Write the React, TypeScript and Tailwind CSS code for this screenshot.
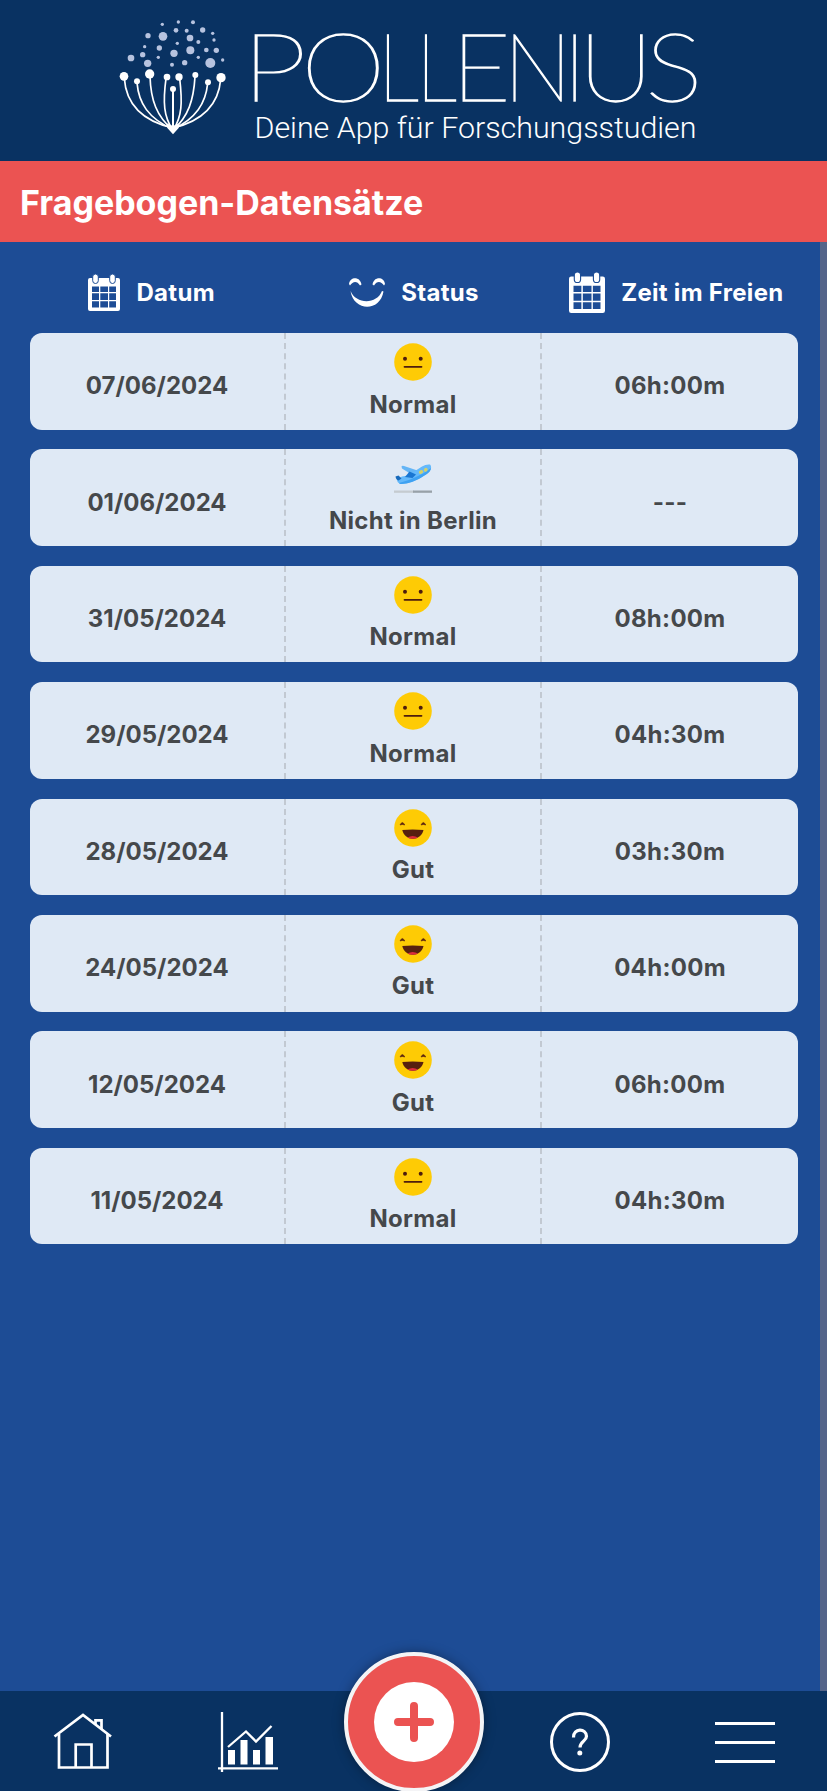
import type { ReactNode } from 'react';

type Status = 'normal' | 'gut' | 'away';

const entries: { date: string; status: Status; time: string }[] = [
  { date: '07/06/2024', status: 'normal', time: '06h:00m' },
  { date: '01/06/2024', status: 'away', time: '---' },
  { date: '31/05/2024', status: 'normal', time: '08h:00m' },
  { date: '29/05/2024', status: 'normal', time: '04h:30m' },
  { date: '28/05/2024', status: 'gut', time: '03h:30m' },
  { date: '24/05/2024', status: 'gut', time: '04h:00m' },
  { date: '12/05/2024', status: 'gut', time: '06h:00m' },
  { date: '11/05/2024', status: 'normal', time: '04h:30m' },
];

const labels: Record<Status, string> = {
  normal: 'Normal',
  gut: 'Gut',
  away: 'Nicht in Berlin',
};

// [cx, cy, r] of the loose pollen grains
const grains = [
  [187, 73, 5], [235, 66, 5], [279, 67, 6], [144, 107, 8], [189, 109, 13], [228, 91, 7],
  [260, 92, 6], [308, 90, 8], [270, 114, 10], [338, 100, 5], [342, 120, 5], [295, 126, 6],
  [232, 130, 5], [134, 140, 5], [178, 144, 8], [128, 164, 8], [93, 174, 10], [143, 190, 11],
  [175, 172, 5], [222, 160, 11], [271, 151, 12], [319, 150, 7], [349, 151, 8], [295, 172, 5],
  [254, 188, 8], [216, 194, 6], [331, 189, 15], [368, 180, 5],
];

const heads = [
  [72, 229, 13], [111, 244, 9], [149, 222, 14], [201, 231, 10], [237, 231, 11],
  [286, 225, 9], [324, 247, 9], [363, 233, 14], [219, 267, 9],
];

// letter, x, horizontal stretch
const wordmark: [string, number, number][] = [
  ['P', 242, 1.22],
  ['O', 301.2, 1.13],
  ['L', 378, 0.86],
  ['L', 416, 0.86],
  ['E', 451.6, 1.07],
  ['N', 503.5, 0.96],
  ['I', 563, 1],
  ['U', 578.6, 1.09],
  ['S', 645.2, 1.14],
];

function Logo() {
  return (
    <svg width="827" height="161" viewBox="0 0 827 161" className="block">
      <g transform="translate(100 0) scale(0.33333)">
        <g fill="#b7c3df">
          {grains.map(([cx, cy, r], i) => <circle key={i} cx={cx} cy={cy} r={r} />)}
        </g>
        <g fill="#fff">
          {heads.map(([cx, cy, r], i) => <circle key={i} cx={cx} cy={cy} r={r} />)}
          <path d="M200 370 L219 378 L238 370 L236 384 L219 403 L202 384 Z" />
        </g>
        <g fill="none" stroke="#fff" strokeWidth="5">
          <path d="M73 235 C78 310 125 362 219 384" />
          <path d="M111 248 C116 310 145 355 219 388" />
          <path d="M150 228 C152 300 170 350 219 390" />
          <path d="M198 235 C188 310 192 350 217 388" />
          <path d="M219 270 V392" strokeWidth="6" />
          <path d="M239 235 C248 310 245 350 221 388" />
          <path d="M285 230 C281 300 265 350 219 390" />
          <path d="M323 250 C317 310 288 355 219 388" />
          <path d="M362 238 C356 310 310 362 219 384" />
        </g>
      </g>
      <g fill="#fff" stroke="#fff" strokeWidth="1.3" fontSize="95" className="font-['Lato',sans-serif] font-thin">
        {wordmark.map(([letter, x, stretch], i) => (
          <text key={i} transform={`translate(${x} 100.5) scale(${stretch} 1)`}>{letter}</text>
        ))}
      </g>
      <text
        x="254.5"
        y="138"
        fill="#fff"
        fontSize="30"
        textLength="442"
        lengthAdjust="spacingAndGlyphs"
        className="font-['Roboto',sans-serif] font-light"
      >
        Deine App für Forschungsstudien
      </text>
    </svg>
  );
}

function CalendarIcon({ className }: { className: string }) {
  return (
    <svg viewBox="0 0 32 37" preserveAspectRatio="none" className={className}>
      <path
        fill="#fff"
        fillRule="evenodd"
        d="M2 4H30Q32 4 32 6V35Q32 37 30 37H2Q0 37 0 35V6Q0 4 2 4ZM4 12.5V18H11V12.5ZM12.3 12.5V18H20V12.5ZM21.2 12.5V18H28V12.5ZM4 19.3V26H11V19.3ZM12.3 19.3V26H20V19.3ZM21.2 19.3V26H28V19.3ZM4 27.3V33.5H11V27.3ZM12.3 27.3V33.5H20V27.3ZM21.2 27.3V33.5H28V27.3Z"
      />
      <rect x="4.7" y="0" width="5.6" height="9.5" rx="2.8" fill="#fff" stroke="#1c4c94" strokeWidth="1" />
      <rect x="21.7" y="0" width="5.6" height="9.5" rx="2.8" fill="#fff" stroke="#1c4c94" strokeWidth="1" />
    </svg>
  );
}

function SmileIcon() {
  return (
    <svg viewBox="0 0 36 29" className="h-[29px] w-[36px]">
      <path d="M0 6C1-1.500 11-2 12.500 6.500L11 7.500C8 2.500 4 3 1 7.500Z" fill="#fff" />
      <path d="M23.500 6.500C25-2 35-1.500 36 6L35 7.500C32 3 28 2.500 25 7.500Z" fill="#fff" />
      <path d="M1.500 13C7 26.500 28 26.500 33 13L34.500 13.500C31 34 5 34 1.500 13Z" fill="#fff" />
    </svg>
  );
}

function StatusIcon({ status }: { status: Status }) {
  if (status === 'away') {
    return (
      <svg viewBox="0 0 38 38" className="size-[38px]">
        <path d="M0 31.500H20V33.800H0Z" fill="#c5cbd0" />
        <path d="M19 31.500H38V33.800H19Z" fill="#98a1a8" />
        <path d="M8 9.500L7.500 7.500Q8 6.500 10 7L25 12L20 17Z" fill="#64b5f6" />
        <path d="M3 20L8 17.500L14 16.500L28 7.500Q32 5 36 5.500Q38.500 8 35.500 12.500Q29 18 20 22Q12 25.500 5.500 24.500Q3 23.500 3 20Z" fill="#64b9fb" />
        <path d="M5 24Q14 22 23 17.500Q31 14 37 9Q37 12 33 15Q26 20 18 23Q11 25.500 6 25Z" fill="#3fa2f2" />
        <path d="M11 18L15.500 12.500L22 15.500L18.500 19Z" fill="#1976d2" />
        <path d="M1.500 17.500L4.500 16.500L7.500 19.500L4.500 21.500Q2 21 1.500 17.500Z" fill="#1669bb" />
        <path d="M26.500 13.200L27.500 12.700M31.500 11L32 10.500" stroke="#d3d06c" strokeWidth="3.300" strokeLinecap="round" />
      </svg>
    );
  }
  return (
    <svg viewBox="0 0 38 38" className="size-[38px]">
      <circle cx="19" cy="19" r="18.800" fill="#fecb05" />
      {status === 'normal' ? (
        <>
          <circle cx="11" cy="15.700" r="2" fill="#4d1d0d" />
          <circle cx="26.700" cy="15.700" r="2" fill="#4d1d0d" />
          <path d="M10.500 23.800H27.500" stroke="#4d1d0d" strokeWidth="1.800" strokeLinecap="round" />
        </>
      ) : (
        <>
          <path d="M6 16Q8.300 11 10.800 16Q8.300 14.800 6 16ZM27 16Q29.300 11 31.800 16Q29.300 14.800 27 16Z" fill="#5a2410" stroke="#5a2410" strokeWidth="0.600" />
          <path d="M8.300 21Q18.500 20 29.500 21C28.500 26 24 29.800 18.900 29.800C13.500 29.800 9.300 26 8.300 21Z" fill="#57200f" />
          <path d="M13.500 28.500Q18.500 25.500 24 28.500Q21.500 29.800 18.700 29.800Q16 29.800 13.500 28.500Z" fill="#dc2c3c" />
        </>
      )}
    </svg>
  );
}

function HeadCell({ icon, children }: { icon: ReactNode; children: ReactNode }) {
  return (
    <div className="flex items-center justify-center gap-4 whitespace-nowrap">
      {icon}
      <span>{children}</span>
    </div>
  );
}

function Row({ date, status, time }: { date: string; status: Status; time: string }) {
  return (
    <div className="grid h-[96.7px] grid-cols-3 rounded-xl bg-[#dfe9f5] text-center leading-[30px] text-[#45484b]">
      <div className="flex items-center justify-center border-r-2 border-dashed border-[#c2c9d2] pt-[10px] tracking-[0px]">{date}</div>
      <div className="flex flex-col items-center border-r-2 border-dashed border-[#c2c9d2] pt-[10px]">
        <StatusIcon status={status} />
        <span className="mt-[8.5px]">{labels[status]}</span>
      </div>
      <div className="flex items-center justify-center pt-[10px]">{time}</div>
    </div>
  );
}

function BottomNav() {
  return (
    <nav className="relative grid h-[100px] grid-cols-5 items-center justify-items-center bg-[#093262] pt-[2px]">
      <svg viewBox="0 0 60 60" className="size-[60px]" fill="none" stroke="#fff" strokeWidth="2.700">
        <path d="M1.500 24.500L30 3L58 24.500" />
        <path d="M6 22V55.500H54.500V22M22.700 55.500V32.500H38.500V55.500" />
        <path d="M42.500 12V8.300H48.500V17" />
      </svg>
      <svg viewBox="0 0 60 60" className="size-[60px]" fill="none" stroke="#fff" strokeWidth="2.300">
        <path d="M4 0V60M0 56.300H60" />
        <path d="M10 35L28 19.500L38 29.500L53.500 14" />
        <g fill="#fff" stroke="none">
          <rect x="10" y="38" width="7" height="14.500" />
          <rect x="22.500" y="28" width="7" height="24.500" />
          <rect x="35" y="38" width="7" height="14.500" />
          <rect x="47.500" y="25" width="7.500" height="27.500" />
        </g>
      </svg>
      <span />
      <div className="ml-[2px] flex size-[60px] items-center justify-center rounded-full border-[3px] border-white text-white">
        <svg viewBox="0 0 20 30" className="h-[30px] w-[20px]" fill="none" stroke="#fff" strokeWidth="3.200">
          <path d="M3.500 10.500C3 0.800 16.500 1 16.500 9.300C16.500 14 10 14.500 10 20.500" />
          <circle cx="9.800" cy="26" r="2.500" fill="#fff" stroke="none" />
        </svg>
      </div>
      <div className="ml-[2px] flex w-[60px] flex-col gap-4">
        <div className="h-[3px] bg-white" />
        <div className="h-[3px] bg-white" />
        <div className="h-[3px] bg-white" />
      </div>
      <button className="absolute -top-[39px] left-1/2 flex size-[140px] -translate-x-1/2 items-center justify-center rounded-full border-4 border-[#f4f4f6] bg-[#eb5352] shadow-[0_0_12px_rgba(0,0,0,0.35)]">
        <span className="flex size-20 items-center justify-center rounded-full bg-white">
          <svg viewBox="0 0 40 40" className="size-10" stroke="#eb5352" strokeWidth="8" strokeLinecap="round">
            <path d="M20 4V36M4 20H36" />
          </svg>
        </span>
      </button>
    </nav>
  );
}

export default function App() {
  return (
    <div className="flex h-[1791px] w-[827px] flex-col overflow-hidden bg-[#1d4c95] font-['Inter',sans-serif] font-bold">
      <header className="h-[161px] bg-[#093262]">
        <Logo />
      </header>
      <div className="flex h-[81px] items-center bg-[#eb5352] pt-[2px] pl-5">
        <h1 className="text-[34px] text-white">Fragebogen-Datensätze</h1>
      </div>

      <main className="flex-1 border-r-[7px] border-[#546489] text-2xl tracking-[0.3px]">
        <div className="ml-[20.5px] grid h-[91px] w-[787px] grid-cols-3 pt-[10px] text-white">
          <HeadCell icon={<CalendarIcon className="h-[37px] w-[32px]" />}>Datum</HeadCell>
          <HeadCell icon={<SmileIcon />}>Status</HeadCell>
          <HeadCell icon={<CalendarIcon className="h-[41px] w-[36px]" />}>Zeit im Freien</HeadCell>
        </div>
        <div className="ml-[30px] flex w-[768px] flex-col gap-[19.7px]">
          {entries.map((entry) => (
            <Row key={entry.date} {...entry} />
          ))}
        </div>
      </main>

      <BottomNav />
    </div>
  );
}
